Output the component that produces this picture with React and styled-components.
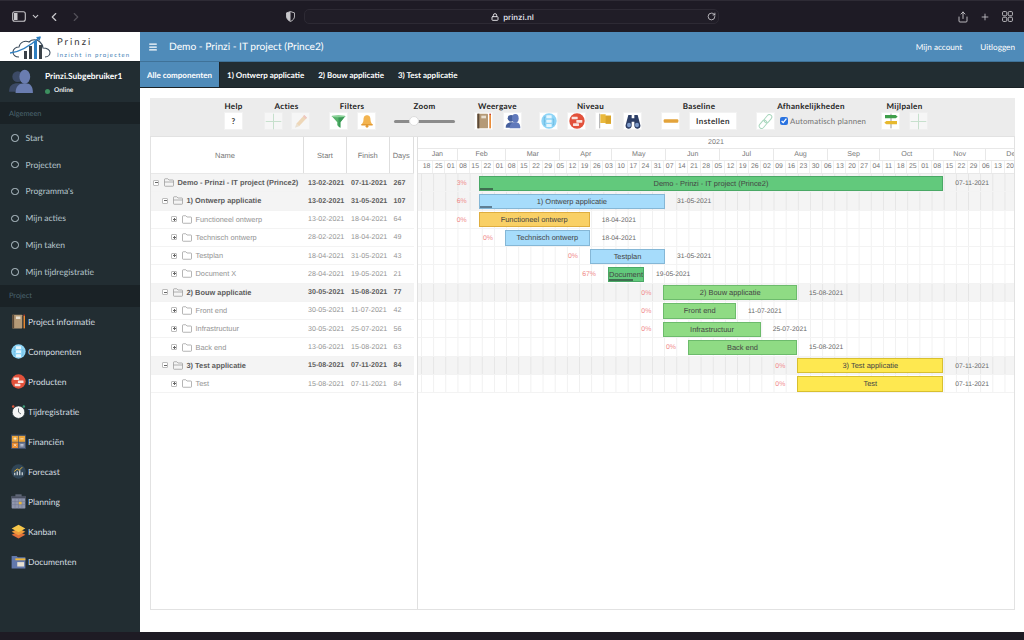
import React from "react";
import styled, { createGlobalStyle } from "styled-components";
import { ChevronDown, ChevronLeft, ChevronRight, Lock, Menu, Plus, RotateCw, Share } from "lucide-react";

const Global = createGlobalStyle`
  html, body { margin: 0; padding: 0; background: #1e1b24; }
  * { box-sizing: border-box; }
  body { text-rendering: geometricPrecision; }
`;

const UI = `Lato, "Noto Sans", sans-serif`;
const ARIAL = `"Liberation Sans", Arial, sans-serif`;
const WEEK = 12.17;

/* ---------- drawn icons ---------- */
const Ico = ({ size = 16, children }) => (
  <svg width={size} height={size} viewBox="0 0 24 24" style={{ display: "block", flex: "none" }}>{children}</svg>
);
const PlusIcon = ({ size }) => (
  <Ico size={size}><path d="M12 1v22M1 12h22" stroke="#a9d8b4" strokeWidth="1.4" fill="none" /></Ico>
);
const PencilIcon = ({ size }) => (
  <Ico size={size}>
    <path d="M5 16 17 3l4 4L9 20z" fill="#f1c78f" />
    <path d="M15 5l4 4 2-2-4-4z" fill="#f0a9a0" />
    <path d="M5 16l4 4-6 2z" fill="#e8d8bd" />
  </Ico>
);
const FunnelIcon = ({ size }) => (
  <Ico size={size}>
    <path d="M1 3h22l-8 10v9l-5-4v-5z" fill="#57b36b" />
    <path d="M12 3h11l-8 10v9l-3-2z" fill="#3b9a57" />
    <ellipse cx="12" cy="3.5" rx="11" ry="1.8" fill="#8ed39b" />
  </Ico>
);
const BellIcon = ({ size }) => (
  <Ico size={size}>
    <path d="M12 2c-5 0-6 4-6 8 0 4-2 6-3 8h18c-1-2-3-4-3-8 0-4-1-8-6-8z" fill="#f3b450" />
    <rect x="2" y="17" width="20" height="2.5" rx="1" fill="#e49b34" />
    <circle cx="12" cy="21" r="2.4" fill="#e49b34" />
  </Ico>
);
const BookIcon = ({ size }) => (
  <Ico size={size}>
    <rect x="2" y="1" width="16" height="22" rx="1" fill="#b59a77" />
    <rect x="2" y="1" width="3" height="22" fill="#5c4a38" />
    <rect x="8" y="4" width="7" height="4" fill="#e8dfd0" />
    <rect x="20" y="3" width="2.4" height="20" fill="#e8862e" />
    <rect x="20" y="1" width="2.4" height="2" fill="#c0392b" />
  </Ico>
);
const PeopleIcon = ({ size, a = "#46609e", b = "#6079bb" }) => (
  <Ico size={size}>
    <circle cx="9" cy="8" r="5" fill={a} />
    <path d="M1 22c0-6 3-8 8-8s8 2 8 8z" fill={a} />
    <ellipse cx="15.5" cy="8" rx="5" ry="6.5" fill={b} />
    <path d="M7 23c0-6 3-9 8.500-9S23 17 23 23z" fill={b} />
  </Ico>
);
const HierBlue = ({ size }) => (
  <Ico size={size}>
    <circle cx="12" cy="12" r="11.500" fill="#8ed5f7" />
    <rect x="8" y="3.500" width="8" height="4.500" rx=".6" fill="#e6f6fe" />
    <rect x="8" y="10" width="8" height="4.500" rx=".6" fill="#e6f6fe" />
    <rect x="8" y="16.500" width="8" height="4.500" rx=".6" fill="#e6f6fe" />
    <path d="M7 6H5v12h2M7 12H5M17 9h2v9h-2" stroke="#5fa9d2" strokeWidth=".8" fill="none" />
  </Ico>
);
const HierRed = ({ size }) => (
  <Ico size={size}>
    <circle cx="12" cy="12" r="11.500" fill="#e2513b" />
    <rect x="4" y="5.500" width="9" height="4" rx=".6" fill="#f9e3de" />
    <rect x="11" y="10.500" width="9" height="4" rx=".6" fill="#f9e3de" />
    <rect x="6" y="15.500" width="9" height="4" rx=".6" fill="#f9e3de" />
  </Ico>
);
const FlagIcon = ({ size }) => (
  <Ico size={size}>
    <rect x="3" y="1" width="1.800" height="22" fill="#b9b9b9" />
    <path d="M5 2h8v2h8v12h-8v-1H5z" fill="#eab93c" />
    <path d="M13 4h8v12h-8z" fill="#d9a52c" />
  </Ico>
);
const BinocularsIcon = ({ size }) => (
  <Ico size={size}>
    <path d="M5 3h5v5h4V3h5l4 15a4.500 4.500 0 0 1-9 2v-7h-4v7a4.500 4.500 0 0 1-9-2z" fill="#2c3e66" />
    <ellipse cx="6" cy="18" rx="3" ry="3.500" fill="#7f9ccb" />
    <ellipse cx="18" cy="18" rx="3" ry="3.500" fill="#7f9ccb" />
  </Ico>
);
const BaselineIcon = ({ size }) => (
  <Ico size={size}><rect x="1" y="9.500" width="22" height="5" rx="1.500" fill="#e3a33a" /></Ico>
);
const LinkIcon = ({ size }) => (
  <Ico size={size}>
    <g fill="none" stroke="#a7d6bc" strokeWidth="1.300">
      <rect x="12" y="1.500" width="7" height="13" rx="3.500" transform="rotate(40 15.500 8)" />
      <rect x="5" y="9.500" width="7" height="13" rx="3.500" transform="rotate(40 8.500 16)" />
    </g>
  </Ico>
);
const SignIcon = ({ size }) => (
  <Ico size={size}>
    <rect x="11" y="1" width="2" height="22" fill="#b7b7b7" />
    <path d="M3 3h16l3 2.500L19 8H3z" fill="#3f9e4b" />
    <path d="M21 12H5l-3 2.500L5 17h16z" fill="#e7b92f" />
  </Ico>
);
const ClockIcon = ({ size }) => (
  <Ico size={size}>
    <circle cx="12" cy="13" r="10" fill="#f6f6f6" stroke="#1c2a30" strokeWidth="1" />
    <path d="M12 13V7M12 13l4 3" stroke="#39474d" strokeWidth="1.200" fill="none" />
    <circle cx="3.500" cy="4" r="2" fill="#d9573d" />
    <circle cx="20.500" cy="4" r="2" fill="#3d9c7a" />
  </Ico>
);
const CalcIcon = ({ size }) => (
  <Ico size={size}>
    <rect x="0" y="1" width="24" height="23" fill="#3c4c66" />
    <rect x="1.500" y="3" width="10" height="9.500" fill="#eca43a" />
    <rect x="12.500" y="3" width="10" height="9.500" fill="#eca43a" />
    <rect x="1.500" y="13.500" width="10" height="9" fill="#e98b2f" />
    <rect x="12.500" y="13.500" width="10" height="9" fill="#6f7a95" />
    <path d="M6.500 5v5M4 7.500h5M15 7.700h5M4.500 16l4 4M8.500 16l-4 4M15 17h5M15 19h5" stroke="#fff" strokeWidth="1" fill="none" />
  </Ico>
);
const ForecastIcon = ({ size }) => (
  <Ico size={size}>
    <circle cx="12" cy="12" r="11.500" fill="#304556" />
    <path d="M6 18v-4M10 18v-6M14 18v-8M18 18v-5" stroke="#cfd8dc" strokeWidth="2" />
    <path d="M5 12l5-4 3 2 5-5" stroke="#eab73a" strokeWidth="1.500" fill="none" />
  </Ico>
);
const CalendarIcon = ({ size }) => (
  <Ico size={size}>
    <rect x="1" y="3" width="22" height="20" rx="1" fill="#8f96ad" />
    <rect x="1" y="3" width="22" height="4" fill="#4a5061" />
    <rect x="7" y="0.500" width="10" height="3.500" fill="#5f6677" />
    <path d="M1 12h22M1 17h22M6.500 7v16M12 7v16M17.500 7v16" stroke="#6f7690" strokeWidth=".8" />
    <rect x="12.500" y="12.500" width="4.500" height="4" fill="#eab73a" />
  </Ico>
);
const LayersIcon = ({ size }) => (
  <Ico size={size}>
    <path d="M12 12 23 17l-11 6L1 17z" fill="#e0703a" />
    <path d="M12 7l11 5.500L12 18 1 12.500z" fill="#ef9c3c" />
    <path d="M12 1l11 6-11 6L1 7z" fill="#f6c64a" />
  </Ico>
);
const DocFolderIcon = ({ size }) => (
  <Ico size={size}>
    <path d="M1 3h8l2 2h12v18H1z" fill="#6278ac" />
    <rect x="7" y="7" width="16" height="3" fill="#edb63c" />
    <rect x="10" y="13" width="11" height="7" fill="#e7e0d0" />
  </Ico>
);
const FolderOutline = ({ open }) => (
  <svg width="10" height="9" viewBox="0 0 20 18" style={{ display: "block", flex: "none" }}>
    <path d="M1 3a1.500 1.500 0 0 1 1.500-1.500h5L10 4h7.500A1.500 1.500 0 0 1 19 5.500V15a1.500 1.500 0 0 1-1.500 1.500h-15A1.500 1.500 0 0 1 1 15z" fill="none" stroke="#8d8d8d" strokeWidth="1.300" />
    {open && <path d="M1 8h18" stroke="#8d8d8d" strokeWidth="1.300" />}
  </svg>
);
const LogoMark = () => (
  <svg width="44" height="24" viewBox="0 0 44 24" style={{ display: "block", flex: "none" }}>
    <path d="M9 21c-4 0-6-2-6-5s3-5 6-5c1-5 6-7 10-5 3-3 8-3 11 0 2 2 3 4 3 6 4 0 7 2 7 4.500S38 21 35 21" fill="none" stroke="#3a4a5a" strokeWidth="1.100" />
    <path d="M0 17C10 16 20 10 30 1" fill="none" stroke="#2f7fc1" strokeWidth="1.300" />
    <path d="M26 1l5-.5-1.500 4.500z" fill="#2f7fc1" />
    <rect x="14" y="15" width="3" height="8" fill="#3a4148" />
    <rect x="19" y="10" width="3" height="13" fill="#3a4148" />
    <rect x="24" y="5" width="3" height="18" fill="#2f7fc1" />
    <rect x="29" y="9" width="3" height="14" fill="#3a4148" />
  </svg>
);
const WindowIcon = () => (
  <svg width="14" height="11" viewBox="0 0 14 11" style={{ display: "block" }}>
    <rect x=".7" y=".7" width="12.600" height="9.600" rx="2" fill="none" stroke="#c9c8cc" strokeWidth="1.100" />
    <rect x="2" y="2" width="3.500" height="7" fill="#c9c8cc" />
  </svg>
);
const ShieldIcon = () => (
  <svg width="9" height="11" viewBox="0 0 10 12" style={{ display: "block", flex: "none" }}>
    <path d="M5 .5 9.500 2v3.500C9.500 8.500 7.500 10.500 5 11.500 2.500 10.500.5 8.500.5 5.500V2z" fill="none" stroke="#c9c8cc" strokeWidth="1" />
    <path d="M5 .5 .5 2v3.500C.5 8.500 2.500 10.500 5 11.500z" fill="#c9c8cc" />
  </svg>
);
const TabsGridIcon = () => (
  <svg width="11" height="11" viewBox="0 0 12 12" style={{ display: "block" }}>
    {[0.6, 6.8].map((x) => [0.6, 6.8].map((y) => (
      <rect key={`${x}${y}`} x={x} y={y} width="4.600" height="4.600" rx="1.200" fill="none" stroke="#c9c8cc" strokeWidth="1" />
    )))}
  </svg>
);

/* ---------- page frame ---------- */
const Page = styled.div`
  width: 1024px; height: 640px; overflow: hidden;
  display: flex; flex-direction: column;
  background: #1e1b24; font-family: ${UI};
`;
const BrowserBar = styled.div`
  height: 32px; flex: none; display: flex; align-items: center;
  padding: 0 11px 0 12px; color: #c9c8cc;
  border-top: 1px solid #2e2b35; background: #1e1b25;
`;
const ChromeStart = styled.div`display: flex; align-items: center; width: 274px; flex: none;`;
const ChromeEnd = styled.div`display: flex; align-items: center; justify-content: flex-end; flex: 1;`;
const NavBtn = styled.span`
  display: flex; width: ${(p) => p.$w || 14}px; justify-content: center;
  margin-left: ${(p) => p.$ml || 0}px; opacity: ${(p) => (p.$dim ? 0.3 : 1)};
`;
const AddressBar = styled.div`
  width: 415px; height: 15px; margin-left: 9px; flex: none;
  border: 1px solid #2d2a34; border-radius: 5px; background: #201d27;
  display: flex; align-items: center; justify-content: center;
  position: relative; gap: 4px; padding-left: 2px;
  font: 600 7.800px Inter, sans-serif; color: #dddce0;
`;
const Reload = styled.span`
  position: absolute; right: 2px; top: 1.500px; display: flex;
`;
const Main = styled.div`flex: 1; display: flex; min-height: 0;`;
const BottomBar = styled.div`height: 8px; flex: none; background: #1e1b24;`;

/* ---------- sidebar ---------- */
const Sidebar = styled.aside`
  width: 140px; flex: none; background: #222d32;
  display: flex; flex-direction: column; color: #b8c7ce;
`;
const LogoBox = styled.div`
  height: 30px; flex: none; background: #fff; display: flex;
  align-items: center; padding: 3px 0 0 10px; gap: 3px;
  border-bottom: 1px solid #1c252a;
`;
const LogoText = styled.div`display: flex; flex-direction: column; gap: 4px; padding-top: 1px;`;
const LogoName = styled.div`
  font: 400 9.500px/10px ${UI}; letter-spacing: 2px; color: #333;
`;
const LogoTag = styled.div`
  font: 400 6px/7px ${UI}; letter-spacing: 1.150px; color: #3f7fb5; white-space: nowrap;
`;
const UserPanel = styled.div`
  height: 40px; flex: none; display: flex; padding: 6px 0 0 8px;
`;
const UserInfo = styled.div`margin-left: 11px; padding-top: 3px;`;
const UserName = styled.div`
  font: 700 8.400px/11px ${UI}; color: #fff; white-space: nowrap;
`;
const UserStatus = styled.div`
  display: flex; align-items: center; gap: 4px; margin-top: 4px;
  font: 700 6.500px/10px ${UI}; color: #e8eef0;
`;
const StatusDot = styled.span`
  width: 5px; height: 5px; border-radius: 50%; background: #3d8f5f;
`;
const SectionHead = styled.div`
  height: ${(p) => p.$h}px; flex: none; background: #1a2226;
  display: flex; align-items: center; padding-left: 9px;
  font: 400 7.400px ${UI}; color: #4b646f;
`;
const NavList = styled.div`display: flex; flex-direction: column;`;
const NavItem = styled.div`
  height: 26.800px; display: flex; align-items: center; padding: 1px 0 0 11px; gap: 7px;
  font: 400 8.500px ${UI}; color: #b8c7ce; white-space: nowrap;
`;
const NavCircle = styled.span`
  width: 7.500px; height: 7.500px; border-radius: 50%; border: 1.300px solid #b8c7ce;
`;
const ProjectItem = styled.div`
  height: 30px; display: flex; align-items: center; padding-left: 11px; gap: 2px;
  font: 400 8.500px ${UI}; color: #d5dde0; white-space: nowrap;
`;

/* ---------- right side ---------- */
const Right = styled.div`flex: 1; display: flex; flex-direction: column; min-width: 0; background: #fff;`;
const TopBar = styled.header`
  height: 30px; flex: none; background: #4f8bb9; display: flex; align-items: center;
  padding: 0 9px 0 8px; color: #fff; border-bottom: 1px solid #3f7298;
`;
const Title = styled.div`font: 400 10.200px ${UI}; margin-left: 11px; flex: 1; white-space: nowrap;`;
const TopLink = styled.a`font: 400 8.200px ${UI}; color: #fff; margin-left: 18px;`;
const TabBar = styled.nav`
  height: 26px; flex: none; display: flex; background: #222d32;
  border-bottom: 1px solid #1a2226;
`;
const Tab = styled.div`
  height: 100%; display: flex; align-items: center; padding: 0 7px;
  width: ${(p) => (p.$active ? "80px" : "auto")};
  font: 700 8px ${UI}; color: #fff; white-space: nowrap;
  background: ${(p) => (p.$active ? "#4f8bb9" : "transparent")};
  border-right: ${(p) => (p.$active ? "1px solid #1a2226" : "none")};
`;
const Content = styled.main`flex: 1; min-height: 0; padding: 10px 9px 22px 10px;`;
const Panel = styled.section`
  height: 100%; display: flex; flex-direction: column;
  border: 1px solid #e2e2e2; border-top: none;
`;

/* ---------- toolbar ---------- */
const Toolbar = styled.div`
  height: 39px; flex: none; background: #ececec; display: flex; padding: 3px 0 0 74px;
  border-bottom: 1px solid #e2e2e2; margin: 0 -1px;
`;
const ToolGroup = styled.div`
  margin-left: ${(p) => p.$ml || 0}px; display: flex; flex-direction: column; align-items: center;
  width: ${(p) => p.$w}px; flex: none;
`;
const ToolLabel = styled.div`
  font: 700 8px/11px ${UI}; color: #222; letter-spacing: .35px; white-space: nowrap;
`;
const ToolRow = styled.div`display: flex; align-items: center; gap: ${(p) => p.$gap ?? 9}px; width: 100%;`;
const ToolBtn = styled.div`
  width: ${(p) => p.$w || 19}px; height: 18px; flex: none; background: #fff;
  border: 1px solid #f2f2f2; display: flex; align-items: center; justify-content: center;
  font: 700 8px ${UI}; color: #333; letter-spacing: .4px;
  opacity: ${(p) => (p.$dim ? 0.55 : 1)};
`;
const SliderTrack = styled.div`
  position: relative; width: 61px; height: 2.500px; background: #8b8b8b; border-radius: 2px; margin-top: 8px;
`;
const SliderKnob = styled.span`
  position: absolute; left: 15px; top: -4px; width: 10px; height: 10px;
  border-radius: 50%; background: #fff; border: 1px solid #ddd;
`;
const CheckLabel = styled.label`
  display: flex; align-items: center; gap: 1px; margin-left: -4px;
  font: 400 7.800px ${UI}; color: #707070; letter-spacing: .2px; white-space: nowrap;
`;
const Check = styled.input`width: 8px; height: 8px; margin: 0 1px 0 0; accent-color: #2a73e0;`;

/* ---------- gantt ---------- */
const Gantt = styled.div`flex: 1; min-height: 0; display: flex;`;
const GridPane = styled.div`width: 263px; flex: none; margin-right: 3px;`;
const COLS = "153px 43px 42.500px 24.500px";
const GridHead = styled.div`
  height: 37px; display: grid; grid-template-columns: ${COLS};
  border-bottom: 1px solid #e8e8e8;
`;
const HeadCell = styled.div`
  display: flex; align-items: center; justify-content: center;
  padding-right: ${(p) => p.$pr || 0}px;
  font: 400 7.500px ${ARIAL}; color: #777;
  border-right: 1px solid #dedede;
`;
const GridRow = styled.div`
  height: 18.270px; display: grid; grid-template-columns: ${COLS}; align-items: center;
  background: ${(p) => (p.$group ? "#f4f4f4" : "#fff")};
  border-bottom: 1px solid #f3f3f3;
  font: ${(p) => (p.$group ? 700 : 400)} 7.400px ${ARIAL};
  color: ${(p) => (p.$group ? "#5c5c5c" : "#949494")};
  white-space: nowrap;
`;
const NameCell = styled.div`
  display: flex; align-items: center; padding-left: ${(p) => 2 + p.$depth * 9}px;
`;
const Expander = styled.span`
  width: 6px; height: 6px; flex: none; border: 1px solid #bcbcbc; border-radius: 1px;
  position: relative; margin-right: 5px; background: #fff;
  &::before {
    content: ""; position: absolute; left: .5px; right: .5px; top: 1.500px; height: 1px; background: #666;
  }
  &::after {
    content: ${(p) => (p.$open ? "none" : '""')}; position: absolute; top: .5px; bottom: .5px; left: 1.500px; width: 1px; background: #666;
  }
`;
const NameText = styled.span`margin-left: 3.500px;`;
const DateCell = styled.div`padding-left: 4px; font-size: 7.100px;`;
const ChartPane = styled.div`
  flex: 1; min-width: 0; overflow: hidden; border-left: 1px solid #e0e0e0;
`;
const TimeRow = styled.div`
  height: ${(p) => p.$h}px; display: flex; padding-left: ${(p) => p.$pl || 0}px;
  border-bottom: 1px solid #e8e8e8; overflow: hidden;
  font: 400 7.100px ${ARIAL}; color: #777;
`;
const YearCell = styled.div`flex: 1; text-align: center; line-height: 11px;`;
const MonthCell = styled.div.attrs((p) => ({ style: { width: p.$w } }))`
  flex: none; text-align: center; line-height: 11px; border-right: 1px solid #e8e8e8;
`;
const WeekCell = styled.div`
  width: ${WEEK}px; flex: none; text-align: center; line-height: 12px; font-size: 6.900px;
  border-right: 1px solid #efefef; overflow: hidden;
`;
const ChartBody = styled.div`
  background-image: linear-gradient(to right, #f0f0f0 1px, transparent 1px);
  background-size: ${WEEK}px 100%;
  background-position: 3px 0;
`;
const ChartRow = styled.div`
  position: relative; height: 18.270px;
  background: ${(p) => (p.$group ? "rgba(0,0,0,.045)" : "transparent")};
  border-bottom: 1px solid #f3f3f3;
`;
const BAR = {
  green: ["#62c97c", "#4aa866", "#3f6f50"],
  blue: ["#a6dcfb", "#85b7d6", "#5f7f94"],
  orange: ["#f9d065", "#dfae3f", "#666"],
  lime: ["#8fdb84", "#6dbb6c", "#555"],
  yellow: ["#fee850", "#d8c02f", "#666"],
};
const Bar = styled.div.attrs((p) => ({ style: { left: p.$x, width: p.$w } }))`
  position: absolute; top: 1.500px; height: 15.300px; padding: 0;
  background: ${(p) => BAR[p.$c][0]};
  border: 1px solid ${(p) => BAR[p.$c][1]};
  font: 400 7.450px/13px ${ARIAL}; color: #444; text-align: center; white-space: nowrap; overflow: hidden;
`;
const Progress = styled.div.attrs((p) => ({ style: { width: p.$w } }))`
  position: absolute; left: 0; bottom: 0; height: 2px; background: ${(p) => BAR[p.$c][2]};
`;
const Pct = styled.span.attrs((p) => ({ style: { right: p.$r } }))`
  position: absolute; top: 1px; font: 400 6.900px/18px ${ARIAL}; color: #f08a8a;
`;
const EndDate = styled.span.attrs((p) => ({ style: { left: p.$x } }))`
  position: absolute; top: 1px; font: 400 6.700px/18px ${ARIAL}; color: #666; white-space: nowrap;
`;

/* ---------- data ---------- */
const general = ["Start", "Projecten", "Programma's", "Mijn acties", "Mijn taken", "Mijn tijdregistratie"];
const project = [
  [BookIcon, "Project informatie"], [HierBlue, "Componenten"], [HierRed, "Producten"],
  [ClockIcon, "Tijdregistratie"], [CalcIcon, "Financiën"], [ForecastIcon, "Forecast"],
  [CalendarIcon, "Planning"], [LayersIcon, "Kanban"], [DocFolderIcon, "Documenten"],
];
const months = [
  ["Jan", 39.700], ["Feb", 48.700], ["Mar", 53.900], ["Apr", 52.100], ["May", 53.900], ["Jun", 53.900],
  ["Jul", 53.900], ["Aug", 53.900], ["Sep", 52.300], ["Oct", 53.900], ["Nov", 52.100], ["Dec", 53.900],
];
const weeks = "18 25 01 08 15 22 01 08 15 22 29 05 12 19 26 03 10 17 24 31 07 14 21 28 05 12 19 26 02 09 16 23 30 06 13 20 27 04 11 18 25 01 08 15 22 29 06 13 20".split(" ");
const rows = [
  { d: 0, g: 1, n: "Demo - Prinzi - IT project (Prince2)", s: "13-02-2021", f: "07-11-2021", days: 267, c: "green", a: 478.7, b: 943.3, pct: "3%", p: 13 },
  { d: 1, g: 1, n: "1) Ontwerp applicatie", s: "13-02-2021", f: "31-05-2021", days: 107, c: "blue", a: 478.7, b: 665, pct: "6%", p: 12 },
  { d: 2, n: "Functioneel ontwerp", s: "13-02-2021", f: "18-04-2021", days: 64, c: "orange", a: 478.7, b: 589.7, pct: "0%" },
  { d: 2, n: "Technisch ontwerp", s: "28-02-2021", f: "18-04-2021", days: 49, c: "blue", a: 505, b: 589.7, pct: "0%" },
  { d: 2, n: "Testplan", s: "18-04-2021", f: "31-05-2021", days: 43, c: "blue", a: 590, b: 665, pct: "0%" },
  { d: 2, n: "Document X", bar: "Document", s: "28-04-2021", f: "19-05-2021", days: 21, c: "green", a: 608, b: 644, pct: "67%", p: 24 },
  { d: 1, g: 1, n: "2) Bouw applicatie", s: "30-05-2021", f: "15-08-2021", days: 77, c: "lime", a: 663.3, b: 797, pct: "0%" },
  { d: 2, n: "Front end", s: "30-05-2021", f: "11-07-2021", days: 42, c: "lime", a: 663.3, b: 736, pct: "0%" },
  { d: 2, n: "Infrastructuur", s: "30-05-2021", f: "25-07-2021", days: 56, c: "lime", a: 663.3, b: 760.7, pct: "0%" },
  { d: 2, n: "Back end", s: "13-06-2021", f: "15-08-2021", days: 63, c: "lime", a: 688, b: 797, pct: "0%" },
  { d: 1, g: 1, n: "3) Test applicatie", s: "15-08-2021", f: "07-11-2021", days: 84, c: "yellow", a: 797.3, b: 943.3, pct: "0%" },
  { d: 2, n: "Test", s: "15-08-2021", f: "07-11-2021", days: 84, c: "yellow", a: 797.3, b: 943.3, pct: "0%" },
];
const CHART_X = 418;
const CHART_W = 596;

export default function App() {
  return (
    <Page>
      <Global />
      <BrowserBar>
        <ChromeStart>
          <WindowIcon />
          <NavBtn $ml={3} $w={12}><ChevronDown size={9} strokeWidth={3} /></NavBtn>
          <NavBtn $ml={6}><ChevronLeft size={14} strokeWidth={2} /></NavBtn>
          <NavBtn $ml={8} $dim><ChevronRight size={14} strokeWidth={2} /></NavBtn>
        </ChromeStart>
        <ShieldIcon />
        <AddressBar>
          <Lock size={8} strokeWidth={3} />
          prinzi.nl
          <Reload><RotateCw size={9} strokeWidth={2} /></Reload>
        </AddressBar>
        <ChromeEnd>
          <Share size={12} strokeWidth={1.800} />
          <NavBtn $ml={11} $w={10}><Plus size={12} strokeWidth={2} /></NavBtn>
          <NavBtn $ml={12} $w={11}><TabsGridIcon /></NavBtn>
        </ChromeEnd>
      </BrowserBar>

      <Main>
        <Sidebar>
          <LogoBox>
            <LogoMark />
            <LogoText>
              <LogoName>Prinzi</LogoName>
              <LogoTag>Inzicht in projecten</LogoTag>
            </LogoText>
          </LogoBox>
          <UserPanel>
            <PeopleIcon size={26} a="#3c4a66" b="#6a7db0" />
            <UserInfo>
              <UserName>Prinzi.Subgebruiker1</UserName>
              <UserStatus><StatusDot />Online</UserStatus>
            </UserInfo>
          </UserPanel>
          <SectionHead $h={22}>Algemeen</SectionHead>
          <NavList>
            {general.map((t) => (
              <NavItem key={t}><NavCircle />{t}</NavItem>
            ))}
          </NavList>
          <SectionHead $h={22}>Project</SectionHead>
          <NavList>
            {project.map(([I, t]) => (
              <ProjectItem key={t}><I size={15} />{t}</ProjectItem>
            ))}
          </NavList>
        </Sidebar>

        <Right>
          <TopBar>
            <Menu size={10} strokeWidth={3} />
            <Title>Demo - Prinzi - IT project (Prince2)</Title>
            <TopLink>Mijn account</TopLink>
            <TopLink>Uitloggen</TopLink>
          </TopBar>
          <TabBar>
            <Tab $active>Alle componenten</Tab>
            <Tab>1) Ontwerp applicatie</Tab>
            <Tab>2) Bouw applicatie</Tab>
            <Tab>3) Test applicatie</Tab>
          </TabBar>
          <Content>
            <Panel>
              <Toolbar>
                <ToolGroup $w={19}>
                  <ToolLabel>Help</ToolLabel>
                  <ToolRow><ToolBtn>?</ToolBtn></ToolRow>
                </ToolGroup>
                <ToolGroup $ml={21} $w={45}>
                  <ToolLabel>Acties</ToolLabel>
                  <ToolRow $gap={8}>
                    <ToolBtn $dim><PlusIcon size={17} /></ToolBtn>
                    <ToolBtn $dim><PencilIcon size={16} /></ToolBtn>
                  </ToolRow>
                </ToolGroup>
                <ToolGroup $ml={20} $w={46}>
                  <ToolLabel>Filters</ToolLabel>
                  <ToolRow>
                    <ToolBtn><FunnelIcon size={15} /></ToolBtn>
                    <ToolBtn><BellIcon size={14} /></ToolBtn>
                  </ToolRow>
                </ToolGroup>
                <ToolGroup $ml={19} $w={61}>
                  <ToolLabel>Zoom</ToolLabel>
                  <SliderTrack><SliderKnob /></SliderTrack>
                </ToolGroup>
                <ToolGroup $ml={19} $w={47}>
                  <ToolLabel>Weergave</ToolLabel>
                  <ToolRow $gap={10}>
                    <ToolBtn><BookIcon size={16} /></ToolBtn>
                    <ToolBtn><PeopleIcon size={16} /></ToolBtn>
                  </ToolRow>
                </ToolGroup>
                <ToolGroup $ml={18} $w={103}>
                  <ToolLabel>Niveau</ToolLabel>
                  <ToolRow>
                    <ToolBtn><HierBlue size={16} /></ToolBtn>
                    <ToolBtn><HierRed size={16} /></ToolBtn>
                    <ToolBtn><FlagIcon size={16} /></ToolBtn>
                    <ToolBtn><BinocularsIcon size={16} /></ToolBtn>
                  </ToolRow>
                </ToolGroup>
                <ToolGroup $ml={19} $w={76}>
                  <ToolLabel>Baseline</ToolLabel>
                  <ToolRow>
                    <ToolBtn><BaselineIcon size={16} /></ToolBtn>
                    <ToolBtn $w={48}>Instellen</ToolBtn>
                  </ToolRow>
                </ToolGroup>
                <ToolGroup $ml={19} $w={110}>
                  <ToolLabel>Afhankelijkheden</ToolLabel>
                  <ToolRow>
                    <ToolBtn><LinkIcon size={17} /></ToolBtn>
                    <CheckLabel><Check type="checkbox" defaultChecked />Automatisch plannen</CheckLabel>
                  </ToolRow>
                </ToolGroup>
                <ToolGroup $ml={15} $w={47}>
                  <ToolLabel>Mijlpalen</ToolLabel>
                  <ToolRow>
                    <ToolBtn><SignIcon size={16} /></ToolBtn>
                    <ToolBtn $dim><PlusIcon size={17} /></ToolBtn>
                  </ToolRow>
                </ToolGroup>
              </Toolbar>
              <Gantt>
                <GridPane>
                  <GridHead>
                    <HeadCell $pr={4}>Name</HeadCell>
                    <HeadCell>Start</HeadCell>
                    <HeadCell>Finish</HeadCell>
                    <HeadCell>Days</HeadCell>
                  </GridHead>
                  {rows.map((r) => (
                    <GridRow key={r.n} $group={r.g}>
                      <NameCell $depth={r.d}>
                        <Expander $open={r.g} />
                        <FolderOutline open={r.g} />
                        <NameText>{r.n}</NameText>
                      </NameCell>
                      <DateCell>{r.s}</DateCell>
                      <DateCell>{r.f}</DateCell>
                      <DateCell>{r.days}</DateCell>
                    </GridRow>
                  ))}
                </GridPane>
                <ChartPane>
                  <TimeRow $h={12}><YearCell>2021</YearCell></TimeRow>
                  <TimeRow $h={12}>
                    {months.map(([m, w]) => <MonthCell key={m} $w={w}>{m}</MonthCell>)}
                  </TimeRow>
                  <TimeRow $h={13} $pl={3}>
                    {weeks.map((w, i) => <WeekCell key={i}>{w}</WeekCell>)}
                  </TimeRow>
                  <ChartBody>
                    {rows.map((r) => (
                      <ChartRow key={r.n} $group={r.g}>
                        <Pct $r={CHART_W - (r.a - CHART_X) + 12}>{r.pct}</Pct>
                        <Bar $c={r.c} $x={r.a - CHART_X} $w={r.b - r.a}>
                          {r.bar || r.n}
                          {r.p && <Progress $c={r.c} $w={r.p} />}
                        </Bar>
                        <EndDate $x={r.b - CHART_X + 12}>{r.f}</EndDate>
                      </ChartRow>
                    ))}
                  </ChartBody>
                </ChartPane>
              </Gantt>
            </Panel>
          </Content>
        </Right>
      </Main>
      <BottomBar />
    </Page>
  );
}
